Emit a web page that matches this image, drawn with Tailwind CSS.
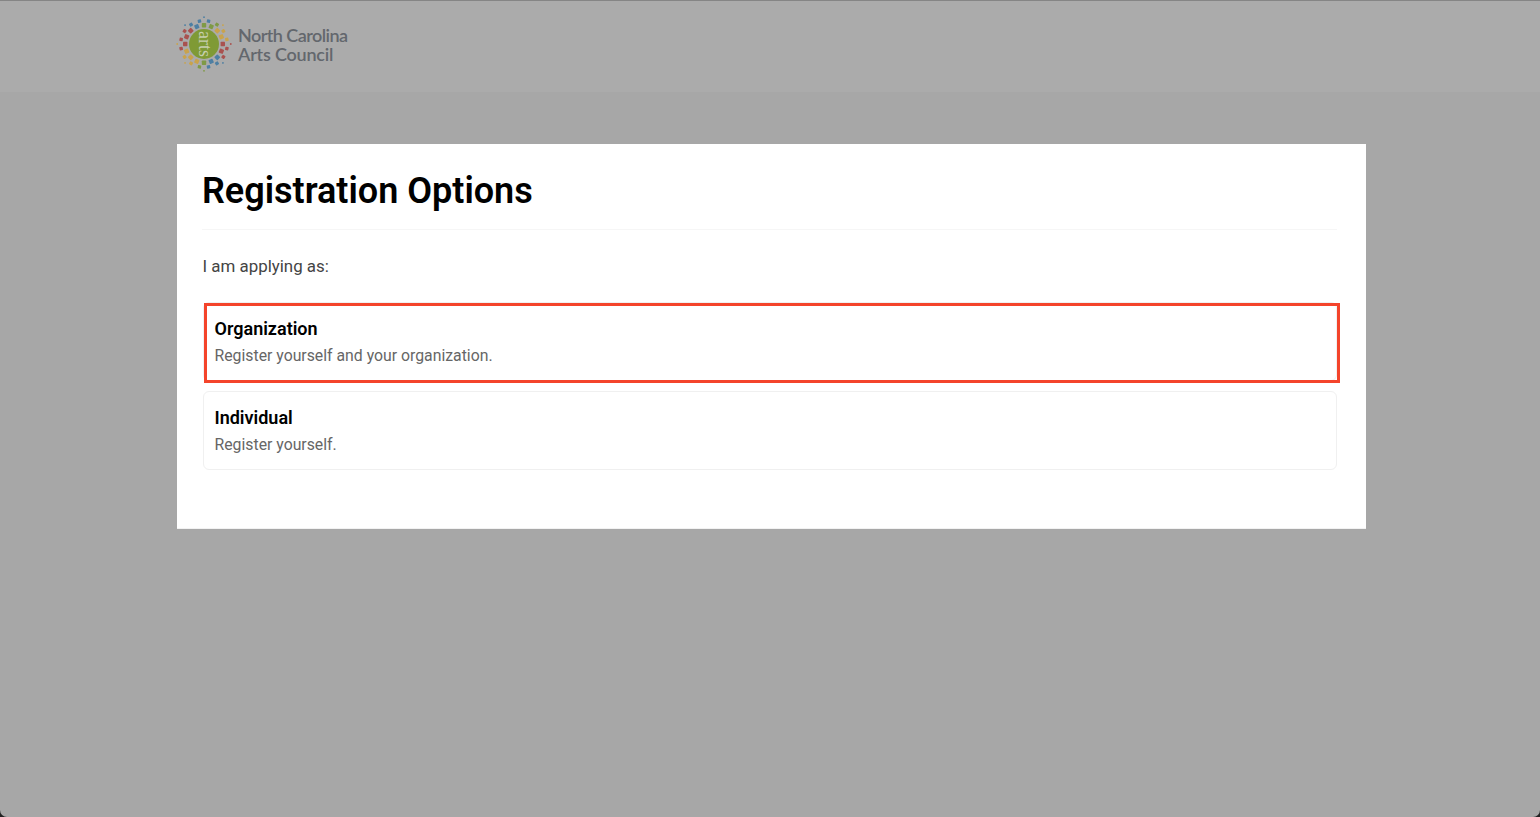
<!doctype html>
<html lang="en">
<head>
<meta charset="utf-8">
<title>Registration Options</title>
<script src="https://cdn.jsdelivr.net/npm/@tailwindcss/browser@4"></script>
</head>
<body class="bg-[#222] overflow-hidden">
<div class="h-[817px] w-[1540px] flex flex-col bg-[#a7a7a7] rounded-b-[7px] overflow-hidden font-[Roboto,sans-serif]">
  <header class="h-[92px] shrink-0 bg-[#ababab] border-t border-[#858585] pl-[176px] pt-[15px] flex items-start">
    <svg width="56" height="56" viewBox="-28 -28 56 56" class="shrink-0">
      <circle r="15" fill="#7f9a35"/>
      <g>
        <rect x="-2.2" y="-21" width="4.4" height="4.4" rx="0.7" fill="#7f9a45" transform="rotate(0)"/>
        <rect x="-2.2" y="-21" width="4.4" height="4.4" rx="0.7" fill="#7f9a45" transform="rotate(22.5)"/>
        <rect x="-2.2" y="-21" width="4.4" height="4.4" rx="0.7" fill="#c9a34c" transform="rotate(45)"/>
        <rect x="-2.2" y="-21" width="4.4" height="4.4" rx="0.7" fill="#c9a34c" transform="rotate(67.5)"/>
        <rect x="-2.2" y="-21" width="4.4" height="4.4" rx="0.7" fill="#a9524f" transform="rotate(90)"/>
        <rect x="-2.2" y="-21" width="4.4" height="4.4" rx="0.7" fill="#a9524f" transform="rotate(112.5)"/>
        <rect x="-2.2" y="-21" width="4.4" height="4.4" rx="0.7" fill="#4d7fa3" transform="rotate(135)"/>
        <rect x="-2.2" y="-21" width="4.4" height="4.4" rx="0.7" fill="#4d7fa3" transform="rotate(157.5)"/>
        <rect x="-2.2" y="-21" width="4.4" height="4.4" rx="0.7" fill="#7f9a45" transform="rotate(180)"/>
        <rect x="-2.2" y="-21" width="4.4" height="4.4" rx="0.7" fill="#c9a34c" transform="rotate(202.5)"/>
        <rect x="-2.2" y="-21" width="4.4" height="4.4" rx="0.7" fill="#c9a34c" transform="rotate(225)"/>
        <rect x="-2.2" y="-21" width="4.4" height="4.4" rx="0.7" fill="#c9a34c" transform="rotate(247.5)"/>
        <rect x="-2.2" y="-21" width="4.4" height="4.4" rx="0.7" fill="#a9524f" transform="rotate(270)"/>
        <rect x="-2.2" y="-21" width="4.4" height="4.4" rx="0.7" fill="#a9524f" transform="rotate(292.5)"/>
        <rect x="-2.2" y="-21" width="4.4" height="4.4" rx="0.7" fill="#a9524f" transform="rotate(315)"/>
        <rect x="-2.2" y="-21" width="4.4" height="4.4" rx="0.7" fill="#4d7fa3" transform="rotate(337.5)"/>

        <rect x="-1.7" y="-25" width="3.4" height="3.4" rx="0.7" fill="#4d7fa3" transform="rotate(11.25)"/>
        <rect x="-1.7" y="-25" width="3.4" height="3.4" rx="0.7" fill="#7f9a45" transform="rotate(33.75)"/>
        <rect x="-1.7" y="-25" width="3.4" height="3.4" rx="0.7" fill="#c9a34c" transform="rotate(56.25)"/>
        <rect x="-1.7" y="-25" width="3.4" height="3.4" rx="0.7" fill="#c9a34c" transform="rotate(78.75)"/>
        <rect x="-1.7" y="-25" width="3.4" height="3.4" rx="0.7" fill="#a9524f" transform="rotate(101.25)"/>
        <rect x="-1.7" y="-25" width="3.4" height="3.4" rx="0.7" fill="#a9524f" transform="rotate(123.75)"/>
        <rect x="-1.7" y="-25" width="3.4" height="3.4" rx="0.7" fill="#4d7fa3" transform="rotate(146.25)"/>
        <rect x="-1.7" y="-25" width="3.4" height="3.4" rx="0.7" fill="#4d7fa3" transform="rotate(168.75)"/>
        <rect x="-1.7" y="-25" width="3.4" height="3.4" rx="0.7" fill="#7f9a45" transform="rotate(191.25)"/>
        <rect x="-1.7" y="-25" width="3.4" height="3.4" rx="0.7" fill="#c9a34c" transform="rotate(213.75)"/>
        <rect x="-1.7" y="-25" width="3.4" height="3.4" rx="0.7" fill="#c9a34c" transform="rotate(236.25)"/>
        <rect x="-1.7" y="-25" width="3.4" height="3.4" rx="0.7" fill="#a9524f" transform="rotate(258.75)"/>
        <rect x="-1.7" y="-25" width="3.4" height="3.4" rx="0.7" fill="#a9524f" transform="rotate(281.25)"/>
        <rect x="-1.7" y="-25" width="3.4" height="3.4" rx="0.7" fill="#a9524f" transform="rotate(303.75)"/>
        <rect x="-1.7" y="-25" width="3.4" height="3.4" rx="0.7" fill="#4d7fa3" transform="rotate(326.25)"/>
        <rect x="-1.7" y="-25" width="3.4" height="3.4" rx="0.7" fill="#4d7fa3" transform="rotate(348.75)"/>

        <circle cy="-26.8" r="0.9" fill="#4d7fa3" transform="rotate(0)"/>
        <circle cy="-26.8" r="0.9" fill="#c9a34c" transform="rotate(45)"/>
        <circle cy="-26.8" r="0.9" fill="#a9524f" transform="rotate(90)"/>
        <circle cy="-26.8" r="0.9" fill="#4d7fa3" transform="rotate(135)"/>
        <circle cy="-26.8" r="0.9" fill="#7f9a45" transform="rotate(180)"/>
        <circle cy="-26.8" r="0.9" fill="#c9a34c" transform="rotate(225)"/>
        <circle cy="-26.8" r="0.9" fill="#c9a34c" transform="rotate(270)"/>
        <circle cy="-26.8" r="0.9" fill="#4d7fa3" transform="rotate(315)"/>
      </g>
      <text transform="rotate(90) translate(0 4.8)" text-anchor="middle" font-family="'Liberation Serif',serif" font-size="18" fill="#c7cfae">arts</text>
    </svg>
    <div class="ml-[6px] mt-[10px] font-['Lato',sans-serif] font-semibold text-[18px] leading-[19px] text-[#63676d] whitespace-nowrap">
      <div class="tracking-[-0.55px]">North Carolina</div>
      <div class="tracking-[-0.2px]">Arts Council</div>
    </div>
  </header>
  <main class="mt-[52px] ml-[177px] w-[1189px] h-[385px] bg-white pl-[26px] pr-[29px] pt-[24px] border-b border-[#f2f2f2]">
    <h1 class="-ml-[1px] text-[36px] leading-[46px] font-semibold text-black border-b border-[#f6f6f6] pb-[15px]">Registration Options</h1>
    <p class="mt-[25px] -ml-[0.5px] text-[16.9px] leading-[22px] text-[#444]">I am applying as:</p>
    <div class="mt-[25px] flex flex-col gap-[10px]">
      <div class="relative h-[79px] rounded-md border border-[#f0f0f0] pl-[10.5px] pt-[13px]">
        <div class="absolute left-[0px] top-[0px] w-[1136px] h-[80px] border-[3px] border-[#f4442b]"></div>
        <div class="text-[18px] leading-[26px] font-semibold text-black">Organization</div>
        <div class="mt-[1px] text-[15.8px] leading-[26px] text-[#666]">Register yourself and your organization.</div>
      </div>
      <div class="h-[79px] rounded-md border border-[#f0f0f0] pl-[10.5px] pt-[13px]">
        <div class="text-[18px] leading-[26px] font-semibold text-black">Individual</div>
        <div class="mt-[1px] text-[15.8px] leading-[26px] text-[#666]">Register yourself.</div>
      </div>
    </div>
  </main>
</div>
</body>
</html>
